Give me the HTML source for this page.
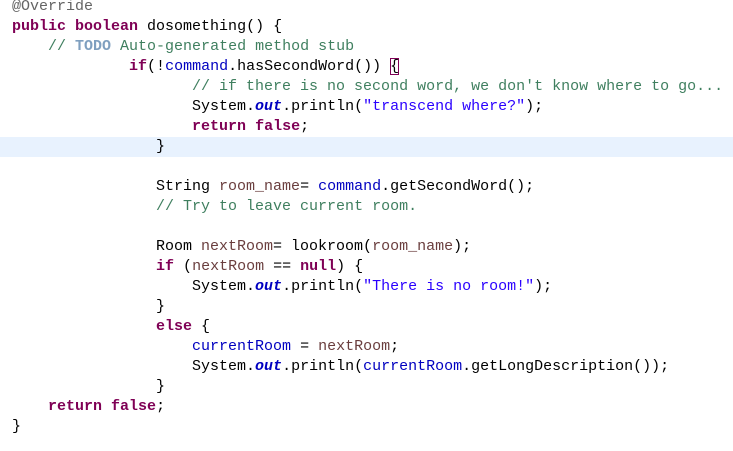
<!DOCTYPE html>
<html><head><style>
body{margin:0;width:733px;height:451px;background:#fff;overflow:hidden;position:relative;font-family:"Liberation Mono","DejaVu Sans Mono",monospace;font-size:15px;color:#000}
.l{position:absolute;left:12px;height:20px;line-height:20px;white-space:pre}
.hl{position:absolute;left:0;width:733px;top:137px;height:20px;background:#e8f2fe}
.k{color:#7f0055;font-weight:bold}
.c{color:#3f7f5f}
.t{color:#7f9fbf;font-weight:bold}
.s{color:#2a00ff}
.f{color:#0000c0}
.o{color:#0000c0;font-weight:bold;font-style:italic}
.v{color:#6a3e3e}
.a{color:#646464}
.b{outline:1px solid #7f0055;outline-offset:-1px}
</style></head><body>
<div class="hl"></div>
<div class="l" style="top:-3px"><span class="a">@Override</span></div>
<div class="l" style="top:17px"><span class="k">public</span> <span class="k">boolean</span> dosomething() {</div>
<div class="l" style="top:37px">    <span class="c">// </span><span class="t">TODO</span><span class="c"> Auto-generated method stub</span></div>
<div class="l" style="top:57px">             <span class="k">if</span>(!<span class="f">command</span>.hasSecondWord()) <span class="b">{</span></div>
<div class="l" style="top:77px">                    <span class="c">// if there is no second word, we don't know where to go...</span></div>
<div class="l" style="top:97px">                    System.<span class="o">out</span>.println(<span class="s">"transcend where?"</span>);</div>
<div class="l" style="top:117px">                    <span class="k">return</span> <span class="k">false</span>;</div>
<div class="l" style="top:137px">                }</div>
<div class="l" style="top:177px">                String <span class="v">room_name</span>= <span class="f">command</span>.getSecondWord();</div>
<div class="l" style="top:197px">                <span class="c">// Try to leave current room.</span></div>
<div class="l" style="top:237px">                Room <span class="v">nextRoom</span>= lookroom(<span class="v">room_name</span>);</div>
<div class="l" style="top:257px">                <span class="k">if</span> (<span class="v">nextRoom</span> == <span class="k">null</span>) {</div>
<div class="l" style="top:277px">                    System.<span class="o">out</span>.println(<span class="s">"There is no room!"</span>);</div>
<div class="l" style="top:297px">                }</div>
<div class="l" style="top:317px">                <span class="k">else</span> {</div>
<div class="l" style="top:337px">                    <span class="f">currentRoom</span> = <span class="v">nextRoom</span>;</div>
<div class="l" style="top:357px">                    System.<span class="o">out</span>.println(<span class="f">currentRoom</span>.getLongDescription());</div>
<div class="l" style="top:377px">                }</div>
<div class="l" style="top:397px">    <span class="k">return</span> <span class="k">false</span>;</div>
<div class="l" style="top:417px">}</div>
</body></html>
